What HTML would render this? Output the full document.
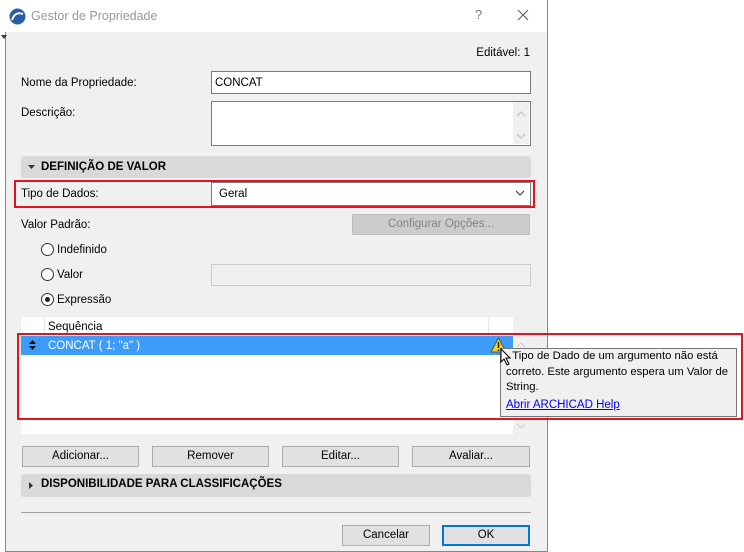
<!DOCTYPE html>
<html><head><meta charset="utf-8"><style>
*{box-sizing:border-box;margin:0;padding:0}
body{width:744px;height:552px;background:#fff;position:relative;overflow:hidden;font-family:"Liberation Sans",sans-serif;font-size:11.5px;color:#000}
.a{position:absolute}
.t{position:absolute;white-space:nowrap;line-height:14px}
.inp{position:absolute;background:#fff;border:1px solid #7a7a7a}
.btn{position:absolute;background:#e1e1e1;border:1px solid #adadad;text-align:center;line-height:19px}
.sec{position:absolute;background:#d9d9d9;border-radius:3px;font-weight:bold}
.rad{position:absolute;width:13px;height:13px;border:1px solid #333;border-radius:50%;background:#fff}
</style></head><body>
<div class="a" style="left:5px;top:32px;width:543px;height:520px;background:#f0f0f0;border-right:1px solid #888;border-bottom:1px solid #888"></div>
<div class="a" style="left:0;top:0;width:548px;height:32px;background:#fff;border-right:1px solid #888"></div>
<svg class="a" style="left:9px;top:8px" width="17" height="17"><circle cx="8.5" cy="8.5" r="8" fill="#2a5da8"/><path d="M3 12 Q6 3 14 6" stroke="#fff" stroke-width="2" fill="none"/></svg>
<div class="t" style="left:31px;top:9px;color:#999;font-size:12.5px">Gestor de Propriedade</div>
<div class="t" style="left:475px;top:8px;color:#777;font-size:13px">?</div>
<svg class="a" style="left:517px;top:9px" width="12" height="12"><path d="M1 1L11 11M11 1L1 11" stroke="#555" stroke-width="1"/></svg>
<div class="a" style="left:5px;top:32px;width:1px;height:520px;background:#888"></div>
<svg class="a" style="left:1px;top:35px" width="6" height="4"><path d="M0 0H6L3 4Z" fill="#333"/></svg>
<div class="t" style="left:470px;top:46px;width:60px;text-align:right">Editável: 1</div>
<div class="t" style="left:21px;top:76px">Nome da Propriedade:</div>
<div class="inp" style="left:211px;top:71px;width:320px;height:23px"></div>
<div class="t" style="left:215px;top:76px">CONCAT</div>
<div class="t" style="left:21px;top:106px">Descrição:</div>
<div class="inp" style="left:211px;top:101px;width:320px;height:45px"></div>
<div class="a" style="left:513px;top:102px;width:16px;height:42px;background:#f0f0f0"></div>
<svg class="a" style="left:515px;top:110px" width="12" height="30"><path d="M2 6L6 2L10 6M2 24L6 28L10 24" stroke="#bbb" fill="none"/></svg>
<div class="sec" style="left:21px;top:156px;width:510px;height:22px"></div>
<svg class="a" style="left:28px;top:165px" width="7" height="4"><path d="M0 0H7L3.5 4Z" fill="#333"/></svg>
<div class="t" style="left:41px;top:160px;font-weight:bold">DEFINIÇÃO DE VALOR</div>
<div class="a" style="left:14px;top:180px;width:521px;height:28px;border:2px solid #e5141b"></div>
<div class="t" style="left:21px;top:187px">Tipo de Dados:</div>
<div class="inp" style="left:211px;top:182px;width:320px;height:24px"></div>
<div class="t" style="left:219px;top:187px">Geral</div>
<svg class="a" style="left:515px;top:190px" width="10" height="6"><path d="M1 1L5 5L9 1" stroke="#333" fill="none"/></svg>
<div class="t" style="left:21px;top:218px">Valor Padrão:</div>
<div class="btn" style="left:352px;top:214px;width:178px;height:21px;background:#ccc;border-color:#bfbfbf;color:#838383">Configurar Opções...</div>
<div class="rad" style="left:41px;top:243px"></div><div class="t" style="left:57px;top:243px">Indefinido</div>
<div class="rad" style="left:41px;top:268px"></div><div class="t" style="left:57px;top:268px">Valor</div>
<div class="inp" style="left:211px;top:264px;width:320px;height:22px;background:#f0f0f0;border-color:#ccc"></div>
<div class="rad" style="left:41px;top:293px"></div><div class="a" style="left:45px;top:297px;width:5px;height:5px;border-radius:50%;background:#222"></div><div class="t" style="left:57px;top:293px">Expressão</div>
<div class="a" style="left:21px;top:317px;width:492px;height:117px;background:#fff"></div>
<div class="a" style="left:44px;top:317px;width:1px;height:18px;background:#e5e5e5"></div>
<div class="a" style="left:488px;top:317px;width:1px;height:18px;background:#e5e5e5"></div>
<div class="t" style="left:48px;top:320px">Sequência</div>
<div class="a" style="left:21px;top:336px;width:492px;height:19px;background:#3d9bf9"></div>
<svg class="a" style="left:29px;top:340px" width="7" height="10"><path d="M0 4H7L3.5 0ZM0 6H7L3.5 10Z" fill="#111"/></svg>
<div class="t" style="left:48px;top:339px;color:#fff">CONCAT ( 1; "a" )</div>
<svg class="a" style="left:490px;top:337px" width="17" height="16"><path d="M8.5 1L16 15H1Z" fill="#f5d50f" stroke="#555"/><path d="M8.5 5V11M8.5 12.5V14" stroke="#222" stroke-width="1.5"/></svg>
<svg class="a" style="left:516px;top:340px" width="10" height="92"><path d="M1 7L5 3L9 7M1 84L5 88L9 84" stroke="#ccc" fill="none"/></svg>
<div class="a" style="left:17px;top:333px;width:726px;height:87px;border:2px solid #e5141b"></div>
<div class="a" style="left:500px;top:348px;width:237px;height:69px;background:#f0f0f0;border:1px solid #767676"></div>
<div class="t" style="left:506px;top:349px;width:230px;white-space:normal;line-height:15.5px;font-size:11.3px">&nbsp;&nbsp;Tipo de Dado de um argumento não está correto. Este argumento espera um Valor de String.</div>
<div class="t" style="left:506px;top:398px;color:#00e;text-decoration:underline">Abrir ARCHICAD Help</div>
<svg class="a" style="left:500px;top:348px" width="14" height="18"><path d="M1 1V14L4 11L7 17L9 16L6 10H10Z" fill="#fff" stroke="#000"/></svg>
<div class="btn" style="left:22px;top:446px;width:117px;height:21px">Adicionar...</div>
<div class="btn" style="left:152px;top:446px;width:117px;height:21px">Remover</div>
<div class="btn" style="left:282px;top:446px;width:117px;height:21px">Editar...</div>
<div class="btn" style="left:412px;top:446px;width:118px;height:21px">Avaliar...</div>
<div class="sec" style="left:21px;top:474px;width:510px;height:23px"></div>
<svg class="a" style="left:29px;top:482px" width="4" height="7"><path d="M0 0V7L4 3.5Z" fill="#333"/></svg>
<div class="t" style="left:41px;top:477px;font-weight:bold">DISPONIBILIDADE PARA CLASSIFICAÇÕES</div>
<div class="a" style="left:21px;top:512px;width:510px;height:1px;background:#a0a0a0"></div>
<div class="btn" style="left:342px;top:525px;width:88px;height:21px">Cancelar</div>
<div class="btn" style="left:442px;top:525px;width:88px;height:21px;border:2px solid #0078d7;line-height:17px">OK</div>
</body></html>
